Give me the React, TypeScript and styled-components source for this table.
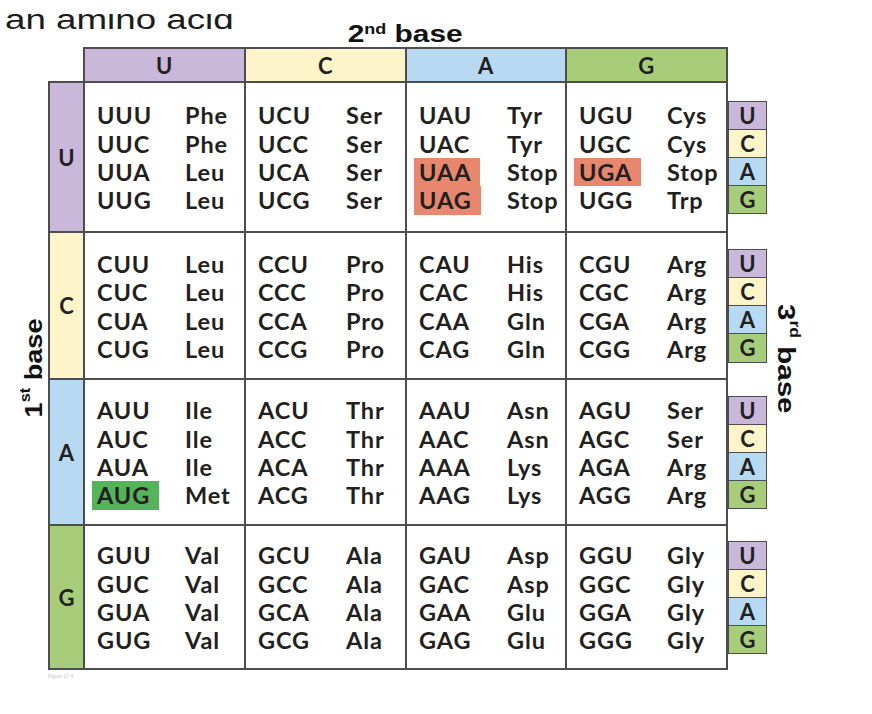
import React from 'react';
import styled, { createGlobalStyle } from 'styled-components';

const GlobalStyle = createGlobalStyle`
  html, body {
    margin: 0;
    padding: 0;
    background: #ffffff;
    overflow: hidden;
  }
`;

const BASES = ['U', 'C', 'A', 'G'];

const BASE_COLORS: Record<string, string> = {
  U: '#c9b8da',
  C: '#fdf5c9',
  A: '#b7d9f1',
  G: '#a8cd7a',
};

const LINE = '#4d4d4d';
const STOP = '#e8876d';
const START = '#55b35a';

// amino acid for each codon, indexed by first + second base
const AMINO: Record<string, string[]> = {
  UU: ['Phe', 'Phe', 'Leu', 'Leu'],
  UC: ['Ser', 'Ser', 'Ser', 'Ser'],
  UA: ['Tyr', 'Tyr', 'Stop', 'Stop'],
  UG: ['Cys', 'Cys', 'Stop', 'Trp'],
  CU: ['Leu', 'Leu', 'Leu', 'Leu'],
  CC: ['Pro', 'Pro', 'Pro', 'Pro'],
  CA: ['His', 'His', 'Gln', 'Gln'],
  CG: ['Arg', 'Arg', 'Arg', 'Arg'],
  AU: ['Ile', 'Ile', 'Ile', 'Met'],
  AC: ['Thr', 'Thr', 'Thr', 'Thr'],
  AA: ['Asn', 'Asn', 'Lys', 'Lys'],
  AG: ['Ser', 'Ser', 'Arg', 'Arg'],
  GU: ['Val', 'Val', 'Val', 'Val'],
  GC: ['Ala', 'Ala', 'Ala', 'Ala'],
  GA: ['Asp', 'Asp', 'Glu', 'Glu'],
  GG: ['Gly', 'Gly', 'Gly', 'Gly'],
};

const markFor = (codon: string) => {
  if (codon === 'AUG') return START;
  if (AMINO[codon.slice(0, 2)][BASES.indexOf(codon[2])] === 'Stop') return STOP;
  return undefined;
};

const ROW_HEIGHTS = [150, 147, 146, 144];

const App = () => {
  return (
    <Page>
      <GlobalStyle />
      <Caption>
        <CaptionText>an amino acid</CaptionText>
      </Caption>
      <Chart>
        <Title>
          <LabelText $scale={1.3}>
            2<Sup>nd</Sup> base
          </LabelText>
        </Title>

        {BASES.map((b, i) => (
          <HeaderCell key={b} $color={BASE_COLORS[b]} style={{ gridColumn: i + 3 }}>
            {b}
          </HeaderCell>
        ))}

        <FirstLabel>
          <VerticalText $flip $scale={1.18}>
            1<Sup>st</Sup> base
          </VerticalText>
        </FirstLabel>

        {BASES.map((first, r) => (
          <React.Fragment key={first}>
            <SideCell $color={BASE_COLORS[first]} style={{ gridRow: r + 3 }}>
              {first}
            </SideCell>
            {BASES.map((second, c) => (
              <CodonCell key={second} style={{ gridRow: r + 3, gridColumn: c + 3 }}>
                {BASES.map((third, k) => {
                  const codon = first + second + third;
                  return (
                    <React.Fragment key={third}>
                      <Codon $mark={markFor(codon)}>{codon}</Codon>
                      <Amino>{AMINO[first + second][k]}</Amino>
                    </React.Fragment>
                  );
                })}
              </CodonCell>
            ))}
            <ThirdStack style={{ gridRow: r + 3 }}>
              {BASES.map((t) => (
                <ThirdBox key={t} $color={BASE_COLORS[t]}>
                  {t}
                </ThirdBox>
              ))}
            </ThirdStack>
          </React.Fragment>
        ))}

        <ThirdLabel>
          <VerticalText $scale={1.28}>
            3<Sup>rd</Sup> base
          </VerticalText>
        </ThirdLabel>
      </Chart>
      <Footnote>Figure 17.4</Footnote>
    </Page>
  );
};

const Page = styled.div`
  width: 872px;
  height: 714px;
  font-family: Lato, 'Open Sans', 'DejaVu Sans', sans-serif;
  color: #231f20;
`;

const Caption = styled.div`
  height: 32px;
  padding: 4px 0 0 5px;
  line-height: 32px;
  clip-path: inset(14px 0 0 0);
`;

const CaptionText = styled.span`
  display: inline-block;
  font-family: 'Liberation Sans', Arial, sans-serif;
  font-size: 27px;
  color: #1c1c1c;
  transform: scaleX(1.36);
  transform-origin: left center;
`;

const Chart = styled.div`
  display: grid;
  margin-top: -12px;
  grid-template-columns: 49px 35px 161px 161px 160px 161px 40px 1fr;
  grid-template-rows: 24px 34px ${ROW_HEIGHTS.map((h) => `${h}px`).join(' ')};
`;

const Title = styled.div`
  grid-column: 3 / 7;
  grid-row: 1;
  display: flex;
  justify-content: center;
  line-height: 20px;
`;

const LabelText = styled.span<{ $scale: number }>`
  display: inline-block;
  font-family: 'Liberation Sans', Arial, sans-serif;
  font-weight: 700;
  font-size: 23px;
  color: #111;
  white-space: nowrap;
  transform: scaleX(${(p) => p.$scale});
`;

const Sup = styled.span`
  font-size: 0.6em;
  vertical-align: 0.6em;
  line-height: 0;
`;

const HeaderCell = styled.div<{ $color: string }>`
  grid-row: 2;
  margin: -1px;
  border: 2px solid ${LINE};
  background: ${(p) => p.$color};
  display: flex;
  align-items: center;
  justify-content: center;
  font-weight: 700;
  font-size: 22px;
  letter-spacing: 0.5px;
`;

const SideCell = styled.div<{ $color: string }>`
  grid-column: 2;
  margin: -1px;
  border: 2px solid ${LINE};
  background: ${(p) => p.$color};
  display: flex;
  align-items: center;
  justify-content: center;
  font-weight: 700;
  font-size: 22px;
`;

const CodonCell = styled.div`
  margin: -1px;
  border: 2px solid ${LINE};
  background: #fff;
  display: grid;
  grid-template-columns: 88px auto;
  align-content: center;
  padding-left: 12px;
  padding-top: 2px;
  font-weight: 700;
  font-size: 23.5px;
  line-height: 28.3px;
  letter-spacing: 0.9px;
`;

const Codon = styled.span<{ $mark?: string }>`
  justify-self: start;
  padding: 0 9px 0 5px;
  margin-left: -5px;
  background: ${(p) => p.$mark ?? 'transparent'};
`;

const Amino = styled.span`
  white-space: nowrap;
`;

const ThirdStack = styled.div`
  grid-column: 7;
  align-self: center;
  display: flex;
  flex-direction: column;
  width: 39px;
  margin-left: 1px;
  margin-top: 2px;
`;

const ThirdBox = styled.div<{ $color: string }>`
  height: 29.5px;
  box-sizing: border-box;
  border: 1.5px solid ${LINE};
  margin-top: -1.5px;
  background: ${(p) => p.$color};
  display: flex;
  align-items: center;
  justify-content: center;
  font-weight: 700;
  font-size: 22px;
`;

const FirstLabel = styled.div`
  grid-column: 1;
  grid-row: 3 / 7;
  display: flex;
  align-items: center;
  justify-content: flex-end;
  padding-right: 3px;
  padding-bottom: 16px;
`;

const ThirdLabel = styled.div`
  grid-column: 8;
  grid-row: 3 / 7;
  display: flex;
  align-items: center;
  padding-left: 7px;
  padding-bottom: 34px;
`;

const VerticalText = styled.span<{ $flip?: boolean; $scale: number }>`
  display: inline-block;
  writing-mode: vertical-rl;
  font-family: 'Liberation Sans', Arial, sans-serif;
  font-weight: 700;
  font-size: 23px;
  line-height: 24px;
  color: #111;
  white-space: nowrap;
  transform: ${(p) => (p.$flip ? 'rotate(180deg) ' : '')}scaleY(${(p) => p.$scale});
`;

const Footnote = styled.div`
  margin: 4px 0 0 48px;
  font-family: 'Liberation Sans', Arial, sans-serif;
  font-size: 5px;
  color: #c4c4c4;
`;

export default App;
